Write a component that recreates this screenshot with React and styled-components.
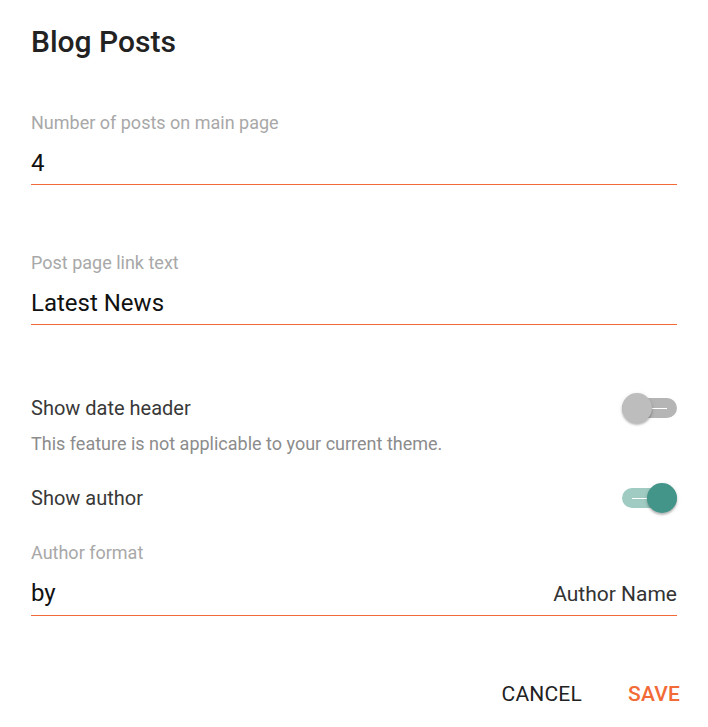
import React, { useState } from "react";
import styled, { createGlobalStyle } from "styled-components";

const GlobalStyle = createGlobalStyle`
  html, body {
    margin: 0;
    padding: 0;
    background: #fff;
  }
  body {
    font-family: Roboto, "Liberation Sans", sans-serif;
    -webkit-font-smoothing: antialiased;
  }
`;

const Dialog = styled.div`
  width: 708px;
  box-sizing: border-box;
  padding: 24px 31px 0 31px;
`;

const Title = styled.h2`
  margin: 0 0 52px 0;
  font-size: 30px;
  line-height: 36px;
  font-weight: 500;
  color: #222;
`;

const Field = styled.div`
  margin-top: ${(p) => p.$top || 0}px;
  margin-bottom: ${(p) => p.$gap || 0}px;
`;

const Label = styled.div`
  font-size: 18px;
  line-height: 22px;
  color: #a8a8a8;
  margin-bottom: 14px;
`;

const InputRow = styled.div`
  display: flex;
  align-items: baseline;
  justify-content: space-between;
  padding-bottom: 6px;
  border-bottom: 1px solid #f26a36;
`;

const Value = styled.span`
  font-size: 24px;
  line-height: 30px;
  color: #111;
`;

const Adornment = styled.span`
  font-size: 21px;
  line-height: 30px;
  color: #333;
`;

const SwitchRow = styled.div`
  display: flex;
  align-items: center;
  justify-content: space-between;
  height: 30px;
`;

const RowText = styled.span`
  font-size: 20px;
  line-height: 30px;
  color: #383838;
`;

const Helper = styled.div`
  margin: 10px 0 28px 0;
  font-size: 18px;
  line-height: 22px;
  color: #8c8c8c;
`;

const Track = styled.button`
  position: relative;
  width: 55px;
  height: 20px;
  padding: 0;
  border: 0;
  border-radius: 10px;
  background: ${(p) => (p.$on ? "#9fcbc3" : "#b5b5b5")};
  cursor: pointer;
`;

const Mark = styled.span`
  position: absolute;
  top: 10px;
  left: ${(p) => (p.$on ? 10 : 30)}px;
  width: 15px;
  height: 1px;
  background: #fff;
`;

const Thumb = styled.span`
  position: absolute;
  top: -5px;
  left: ${(p) => (p.$on ? 25 : 0)}px;
  width: 30px;
  height: 30px;
  border-radius: 50%;
  background: ${(p) => (p.$on ? "#43958a" : "#bdbdbd")};
  box-shadow: 0 2px 2px rgba(0, 0, 0, 0.22), 0 1px 4px rgba(0, 0, 0, 0.12);
`;

const Actions = styled.div`
  display: flex;
  justify-content: flex-end;
  gap: 46px;
  margin: 60px -3px 0 0;
`;

const Button = styled.button`
  padding: 0;
  border: 0;
  background: none;
  font-family: Roboto, "Liberation Sans", sans-serif;
  font-size: 21px;
  line-height: 36px;
  font-weight: ${(p) => (p.$primary ? 500 : 400)};
  letter-spacing: 0.2px;
  text-transform: uppercase;
  color: ${(p) => (p.$primary ? "#f26a36" : "#222")};
  cursor: pointer;
`;

function Toggle({ on, onChange }) {
  return (
    <Track $on={on} onClick={() => onChange(!on)}>
      <Mark $on={on} />
      <Thumb $on={on} />
    </Track>
  );
}

export default function App() {
  const [showDate, setShowDate] = useState(false);
  const [showAuthor, setShowAuthor] = useState(true);

  return (
    <>
      <GlobalStyle />
      <Dialog>
        <Title>Blog Posts</Title>

        <Field $gap={67}>
          <Label>Number of posts on main page</Label>
          <InputRow>
            <Value>4</Value>
          </InputRow>
        </Field>

        <Field $gap={68}>
          <Label>Post page link text</Label>
          <InputRow>
            <Value>Latest News</Value>
          </InputRow>
        </Field>

        <SwitchRow>
          <RowText>Show date header</RowText>
          <Toggle on={showDate} onChange={setShowDate} />
        </SwitchRow>
        <Helper>This feature is not applicable to your current theme.</Helper>

        <SwitchRow>
          <RowText>Show author</RowText>
          <Toggle on={showAuthor} onChange={setShowAuthor} />
        </SwitchRow>

        <Field $top={29}>
          <Label>Author format</Label>
          <InputRow>
            <Value>by</Value>
            <Adornment>Author Name</Adornment>
          </InputRow>
        </Field>

        <Actions>
          <Button>Cancel</Button>
          <Button $primary>Save</Button>
        </Actions>
      </Dialog>
    </>
  );
}
